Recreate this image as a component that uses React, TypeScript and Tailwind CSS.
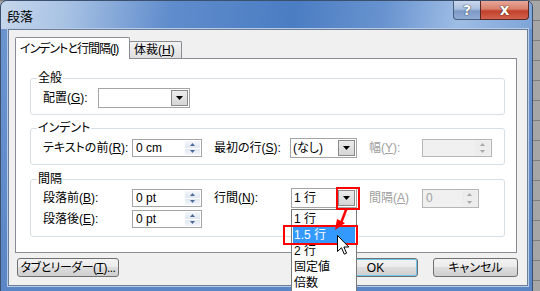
import React from 'react';

function Mn({ c }: { c: string }) {
  return <span className="underline underline-offset-[1px] decoration-[1px]">{c}</span>;
}

function Arrow({ color = '#000' }: { color?: string }) {
  return (
    <svg width="7" height="4" viewBox="0 0 7 4">
      <path d="M0 0h7L3.5 4z" fill={color} />
    </svg>
  );
}

function Combo({ className, text }: { className: string; text: string }) {
  return (
    <div className={`flex h-[20px] border border-[#a5a5a5] bg-white ${className}`}>
      <div className="flex-1 pl-[2px] leading-[18px] whitespace-nowrap">{text}</div>
      <div className="m-[1px] w-[17px] border border-[#8a8a8a] bg-[linear-gradient(#ececec,#d6d6d6)] flex items-center justify-center">
        <Arrow />
      </div>
    </div>
  );
}

function Spin({ className, text, disabled }: { className: string; text: string; disabled?: boolean }) {
  const tri = disabled ? '#a8a8a8' : '#4d6a98';
  return (
    <div
      className={`flex border ${disabled ? 'border-[#b5b5b5] bg-[#f0f0f0] text-[#a0a0a0]' : 'border-[#a5a5a5] bg-white text-black'} ${className}`}
    >
      <div className="flex-1 pl-[3px] flex items-center whitespace-nowrap">{text}</div>
      <div className="m-[1px] w-[15px] flex flex-col gap-[1px]">
        <div className={`flex-1 flex items-center justify-center ${disabled ? 'bg-[#ececec]' : 'bg-[linear-gradient(#f4f7fb,#dfe7f1)]'}`}>
          <svg width="5" height="3" viewBox="0 0 5 3">
            <path d="M0 3h5L2.5 0z" fill={tri} />
          </svg>
        </div>
        <div className={`flex-1 flex items-center justify-center ${disabled ? 'bg-[#ececec]' : 'bg-[linear-gradient(#dfe7f1,#f4f7fb)]'}`}>
          <svg width="5" height="3" viewBox="0 0 5 3">
            <path d="M0 0h5L2.5 3z" fill={tri} />
          </svg>
        </div>
      </div>
    </div>
  );
}

function Group({ title, className, children }: { title: string; className: string; children: React.ReactNode }) {
  return (
    <div className={`relative ml-[14px] w-[475px] rounded-[3px] border border-[#d5dfe5] pl-[12px] ${className}`}>
      <div className="absolute top-[-8px] left-[6px] px-[1px] bg-white leading-[14px]">{title}</div>
      {children}
    </div>
  );
}

function Button({ className, children }: { className: string; children: React.ReactNode }) {
  return (
    <div
      className={`h-[19px] rounded-[3px] border border-[#707070] bg-[linear-gradient(#f2f2f2_0%,#ebebeb_50%,#dddddd_50%,#cfcfcf_100%)] flex items-center justify-center ${className}`}
    >
      <span className="whitespace-nowrap">{children}</span>
    </div>
  );
}

export default function App() {
  return (
    <div className="relative w-[540px] h-[291px] overflow-hidden flex bg-[repeating-linear-gradient(180deg,#7d7d7d_0px,#7d7d7d_1px,#a6a6a6_1px,#a6a6a6_20px)] text-[12px] leading-[14px] text-black font-['Liberation_Sans','Noto_Sans_CJK_JP',sans-serif] [font-feature-settings:'palt']">
      <div className="w-[533px] h-[293px] flex flex-col rounded-t-[7px] border border-[#3b4f6e] bg-[linear-gradient(180deg,#6d96d0,#5a86c6)]">
        {/* title bar */}
        <div className="h-[28px] shrink-0 flex items-start rounded-t-[6px] bg-[linear-gradient(97deg,#c6d7ec_0%,#a9c3e4_12%,#5f8ccc_32%,#4b7dc3_55%,#6893cf_72%,#9ebde5_86%,#7ea4d8_100%)]">
          <div className="pl-[6px] pt-[9px] text-[13px] leading-[14px]">段落</div>
          <div className="ml-auto mr-[3px] flex">
            <div className="w-[27px] h-[19px] rounded-bl-[4px] border border-r-0 border-t-0 border-[#4a5f80] bg-[linear-gradient(#c9d8ec_0%,#a9bfdf_45%,#7d9ac6_55%,#91acd4_100%)] flex items-center justify-center text-white font-bold text-[14px] font-['DejaVu_Sans',sans-serif] [text-shadow:0_0_1px_#1f2f4a,0_0_1px_#1f2f4a]">
              ?
            </div>
            <div className="w-[49px] h-[19px] rounded-br-[4px] border border-t-0 border-[#5a2a22] bg-[linear-gradient(#e8a798_0%,#d9806d_45%,#c0412b_55%,#d3624e_100%)] flex items-center justify-center text-white font-bold text-[15px] leading-[15px] font-['DejaVu_Sans',sans-serif] [text-shadow:0_0_1px_#3a1008,0_0_1px_#3a1008]">
              x
            </div>
          </div>
        </div>

        {/* client */}
        <div className="flex-1 ml-[7px] mr-[4px] mb-[6px] border border-[#6b7e99] bg-[#f0f0f0] pl-[6px] pr-[10px] pt-[7px] flex flex-col shadow-[0_0_0_1px_#b8cce8]">
          <div className="h-[21px] flex items-end">
            <div className="relative z-10 mb-[-1px] w-[115px] h-[22px] border border-b-0 border-[#898c95] bg-white rounded-t-[2px] pl-[4px] flex items-center">
              <span className="whitespace-nowrap tracking-[-1px]">
                インデントと行間隔(<Mn c="I" />)
              </span>
            </div>
            <div className="w-[52px] h-[17px] border border-l-0 border-b-0 border-[#898c95] bg-[linear-gradient(#f3f3f3,#e0e0e0)] rounded-tr-[2px] pl-[4px] flex items-center">
              <span className="whitespace-nowrap">
                体裁(<Mn c="H" />)
              </span>
            </div>
          </div>

          <div className="h-[195px] border border-[#898c95] bg-white flex flex-col">
            <Group title="全般" className="mt-[19px] h-[37px] pt-[9px]">
              <div className="flex items-center h-[20px]">
                <div className="w-[55px] shrink-0">配置(<Mn c="G" />):</div>
                <Combo className="w-[92px]" text="" />
              </div>
            </Group>

            <Group title="インデント" className="mt-[13px] h-[37px] pt-[9px]">
              <div className="flex items-center h-[20px]">
                <div className="w-[89px] shrink-0">テキストの前(<Mn c="R" />):</div>
                <Spin className="w-[70px] h-[18px]" text="0 cm" />
                <div className="ml-[12px] w-[76px] shrink-0">最初の行(<Mn c="S" />):</div>
                <Combo className="w-[67px]" text="(なし)" />
                <div className="ml-[12px] w-[53px] shrink-0 text-[#a0a0a0]">幅(<Mn c="Y" />):</div>
                <Spin className="w-[70px] h-[18px]" text="" disabled />
              </div>
            </Group>

            <Group title="間隔" className="mt-[14px] h-[58px] pt-[8px]">
              <div className="flex items-center h-[20px]">
                <div className="w-[89px] shrink-0">段落前(<Mn c="B" />):</div>
                <Spin className="w-[70px] h-[18px]" text="0 pt" />
                <div className="ml-[12px] w-[77px] shrink-0">行間(<Mn c="N" />):</div>
                <Combo className="w-[66px]" text="1 行" />
                <div className="ml-[12px] w-[53px] shrink-0 text-[#a0a0a0]">間隔(<Mn c="A" />)</div>
                <Spin className="w-[57px] h-[19px]" text="0" disabled />
              </div>
              <div className="mt-[1px] flex items-center h-[20px]">
                <div className="w-[89px] shrink-0">段落後(<Mn c="E" />):</div>
                <Spin className="w-[70px] h-[18px]" text="0 pt" />
              </div>
            </Group>
          </div>

          <div className="mt-[5px] flex items-center">
            <Button className="ml-[2px] w-[102px] tracking-[-0.5px]">
              タブとリーダー(<Mn c="T" />)...
            </Button>
            <Button className="ml-auto w-[85px] border-[#3c7fb1] shadow-[inset_0_0_0_1px_#6fc5f0]">OK</Button>
            <Button className="ml-[15px] mr-[-1px] w-[85px]">キャンセル</Button>
          </div>
        </div>
      </div>

      {/* open dropdown list */}
      <div className="absolute left-[291px] top-[209px] w-[66px] h-[90px] border border-[#7a7a7a] bg-white pt-[1px]">
        <div className="h-[16px] pl-[2px] flex items-center">1 行</div>
        <div className="h-[16px] mx-[1px] pl-[1px] flex items-center bg-[#3399ff] text-white">1.5 行</div>
        <div className="h-[16px] pl-[2px] flex items-center">2 行</div>
        <div className="h-[16px] pl-[2px] flex items-center">固定値</div>
        <div className="h-[16px] pl-[2px] flex items-center">倍数</div>
      </div>

      {/* red annotation boxes */}
      <div className="absolute left-[336px] top-[187px] w-[24px] h-[23px] border-2 border-[#ff0000]" />
      <div className="absolute left-[283px] top-[225px] w-[75px] h-[20px] border-2 border-[#ff0000]" />

      {/* red arrow */}
      <svg className="absolute left-[328px] top-[205px]" width="24" height="30" viewBox="0 0 24 30">
        <path d="M18 5 L13 18" stroke="#ff0000" strokeWidth="2.5" strokeLinecap="round" />
        <path d="M7 25 L9 14 L17 18 Z" fill="#ff0000" />
      </svg>

      {/* mouse pointer */}
      <svg className="absolute left-[337px] top-[235px]" width="13" height="21" viewBox="0 0 13 21">
        <path
          d="M0.5 0.5 L0.5 16.5 L4.5 12.8 L7.3 19.2 L9.6 18.2 L6.9 12 L11.8 12 Z"
          fill="#ffffff"
          stroke="#000000"
          strokeWidth="1"
          strokeLinejoin="miter"
        />
      </svg>
    </div>
  );
}
